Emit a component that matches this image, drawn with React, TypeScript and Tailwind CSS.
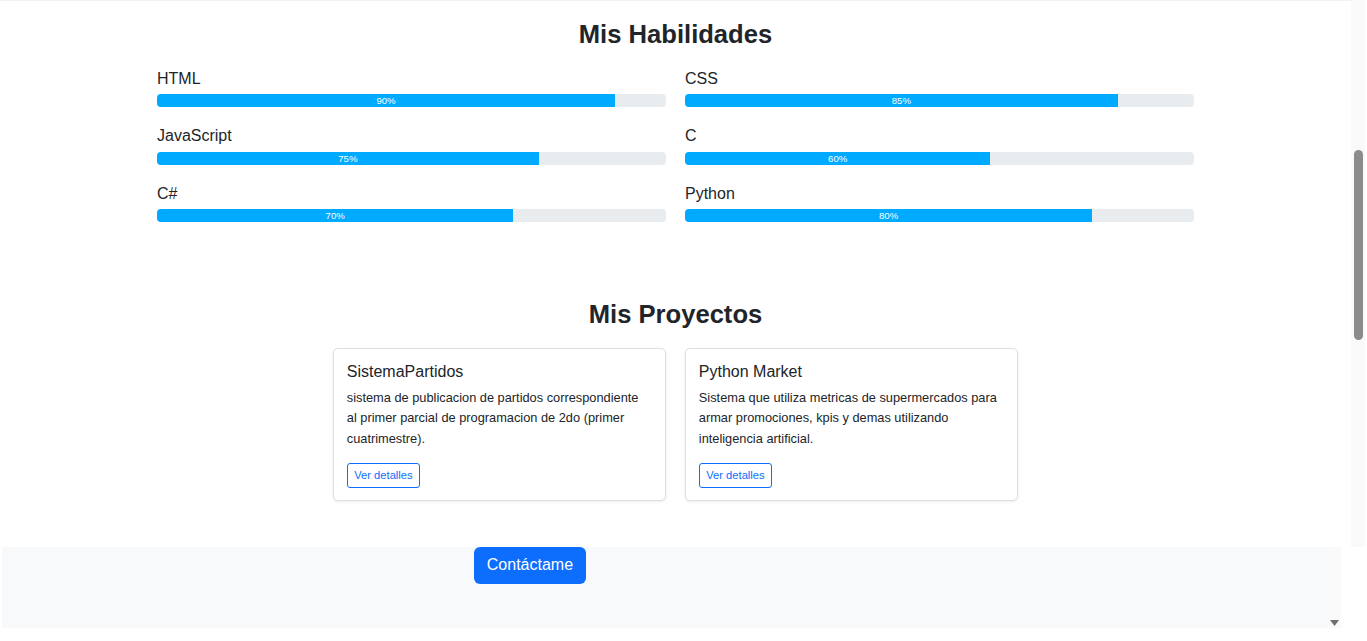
const skills = [
  { name: "HTML", value: 90 },
  { name: "CSS", value: 85 },
  { name: "JavaScript", value: 75 },
  { name: "C", value: 60 },
  { name: "C#", value: 70 },
  { name: "Python", value: 80 },
];

const projects = [
  {
    title: "SistemaPartidos",
    text: "sistema de publicacion de partidos correspondiente al primer parcial de programacion de 2do (primer cuatrimestre).",
  },
  {
    title: "Python Market",
    text: "Sistema que utiliza metricas de supermercados para armar promociones, kpis y demas utilizando inteligencia artificial.",
  },
];

const SkillBar = ({ name, value }: { name: string; value: number }) => (
  <div className="mb-[19px]">
    <h5 className="text-[16px] leading-[1.2] mb-[6.4px] text-[#212529]">{name}</h5>
    <div className="h-[12.8px] rounded-[4px] bg-[#e9ecef] flex overflow-hidden">
      <div
        className="h-full bg-[#00aaff] text-white text-[9.6px] leading-[13px] text-center"
        style={{ width: `${value}%` }}
      >
        {value}%
      </div>
    </div>
  </div>
);

const ProjectCard = ({ title, text }: { title: string; text: string }) => (
  <div className="w-[333px] rounded-[5px] border border-[#dcdfe3] bg-white shadow-[0_1px_3px_rgba(0,0,0,0.08)] pl-[12.8px] pr-[17px] pt-[12.8px] pb-[12px]">
    <h5 className="text-[16px] leading-[1.2] mb-[6.4px] text-[#212529]">{title}</h5>
    <p className="text-[12.8px] leading-[1.6] mb-[12.8px] text-[#212529]">{text}</p>
    <button className="border border-[#0d6efd] text-[#0d6efd] text-[11.2px] leading-[1.5] px-[6.4px] py-[3px] rounded-[3px]">
      Ver detalles
    </button>
  </div>
);

export default function App() {
  return (
    <div className="w-[1367px] h-[641px] overflow-hidden bg-white font-['Liberation_Sans',Arial,sans-serif]">
      <div className="flex h-[547px]">
        {/* page content */}
        <main className="w-[1351px] border-t border-[#f2f2f2]">
          <section className="pt-[18px]">
            <h2 className="text-center text-[25.6px] leading-[1.2] font-bold text-[#212529] mb-[19.2px]">
              Mis Habilidades
            </h2>
            <div className="w-[1037px] mx-auto grid grid-cols-2 gap-x-[19px]">
              {skills.map((s) => (
                <SkillBar key={s.name} name={s.name} value={s.value} />
              ))}
            </div>
          </section>

          <section className="pt-[58px]">
            <h2 className="text-center text-[25.6px] leading-[1.2] font-bold text-[#212529] mb-[18.5px]">
              Mis Proyectos
            </h2>
            <div className="flex justify-center gap-[19px]">
              {projects.map((p) => (
                <ProjectCard key={p.title} title={p.title} text={p.text} />
              ))}
            </div>
          </section>
        </main>

        {/* scrollbar */}
        <div className="w-[14px] bg-[#f9f9f9] pt-[150px] flex justify-center">
          <div className="w-[9px] h-[190px] rounded-full bg-[#8b8b8b]" />
        </div>
        <div className="w-[2px]" />
      </div>

      {/* contact band */}
      <div className="flex h-[81px]">
        <div className="w-[2px]" />
        <div className="w-[1325px] bg-[#f8f9fa] pl-[472px]">
          <button className="bg-[#0d6efd] text-white text-[16px] leading-[1.5] px-[12.8px] py-[6.4px] rounded-[6px]">
            Contáctame
          </button>
        </div>
        <div className="w-[14px] bg-[#fafafa] flex flex-col justify-end items-center pb-[2px]">
          <svg width="9" height="6" viewBox="0 0 9 6">
            <path d="M0 0 L9 0 L4.5 6 Z" fill="#6f6f6f" />
          </svg>
        </div>
      </div>
    </div>
  );
}
